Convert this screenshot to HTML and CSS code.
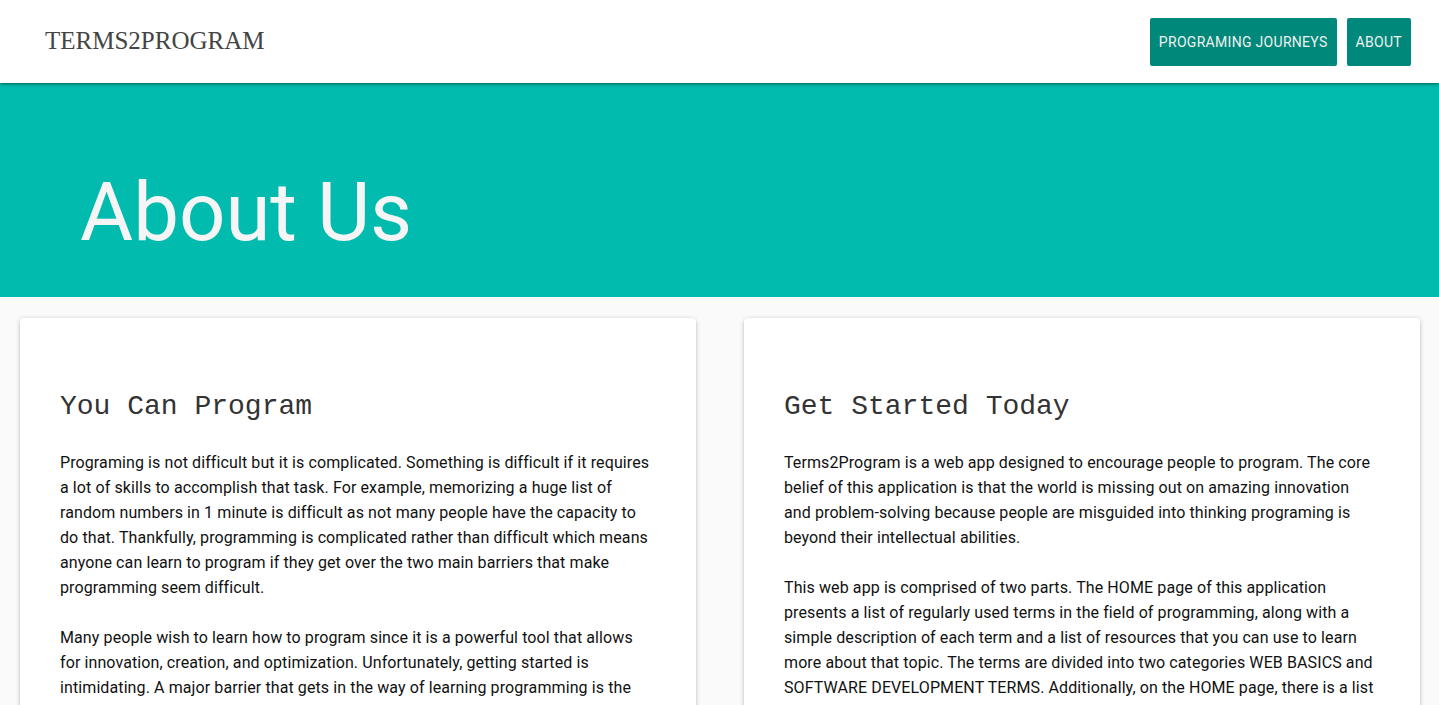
FILE: index.html
```html
<!DOCTYPE html>
<html lang="en">
<head>
<meta charset="utf-8">
<title>Terms2Program - About</title>
<link rel="stylesheet" href="styles.css">
</head>
<body>
<header class="topbar">
  <div class="brand">TERMS2PROGRAM</div>
  <nav class="nav">
    <a class="nav-btn" href="#">Programing Journeys</a>
    <a class="nav-btn" href="#">About</a>
  </nav>
</header>
<section class="hero">
  <h1 class="hero-title">About Us</h1>
</section>
<main class="cards">
  <article class="card">
    <h2 class="card-title">You Can Program</h2>
    <p>Programing is not difficult but it is complicated. Something is difficult if it requires a lot of skills to accomplish that task. For example, memorizing a huge list of random numbers in 1 minute is difficult as not many people have the capacity to do that. Thankfully, programming is complicated rather than difficult which means anyone can learn to program if they get over the two main barriers that make programming seem difficult.</p>
    <p>Many people wish to learn how to program since it is a powerful tool that allows for innovation, creation, and optimization. Unfortunately, getting started is intimidating. A major barrier that gets in the way of learning programming is the overwhelming amount of new terminology that beginners come across.</p>
  </article>
  <article class="card">
    <h2 class="card-title">Get Started Today</h2>
    <p>Terms2Program is a web app designed to encourage people to program. The core belief of this application is that the world is missing out on amazing innovation and problem-solving because people are misguided into thinking programing is beyond their intellectual abilities.</p>
    <p>This web app is comprised of two parts. The HOME page of this application presents a list of regularly used terms in the field of programming, along with a simple description of each term and a list of resources that you can use to learn more about that topic. The terms are divided into two categories WEB BASICS and SOFTWARE DEVELOPMENT TERMS. Additionally, on the HOME page, there is a list of programming journeys that you can follow.</p>
  </article>
</main>
</body>
</html>
```
FILE: styles.css
```css
html, body {
  margin: 0;
  padding: 0;
}
body {
  background: #fafafa;
  font-family: Roboto, "Noto Sans", sans-serif;
  color: #000;
}
.topbar {
  position: relative;
  z-index: 2;
  height: 83px;
  background: #fff;
  display: flex;
  align-items: center;
  justify-content: space-between;
  padding: 0 28px 0 45px;
  box-shadow: 0 2px 2px 0 rgba(0,0,0,0.14), 0 3px 1px -2px rgba(0,0,0,0.12), 0 1px 5px 0 rgba(0,0,0,0.2);
}
.brand {
  font-family: "Liberation Serif", serif;
  font-size: 25px;
  color: #444;
  padding-bottom: 1px;
}
.nav {
  display: flex;
  gap: 10px;
  margin-top: 1px;
}
.nav-btn {
  display: flex;
  align-items: center;
  height: 48px;
  padding: 0 9px;
  background: #00897b;
  color: #f0f0f0;
  text-decoration: none;
  text-transform: uppercase;
  font-size: 14px;
  letter-spacing: 0.3px;
  border-radius: 2px;
}
.hero {
  background: #00bbae;
  height: 214px;
  display: flex;
  align-items: center;
  padding-left: 80px;
  box-sizing: border-box;
  padding-top: 44px;
}
.hero-title {
  margin: 0;
  font-family: Roboto, sans-serif;
  font-weight: 400;
  font-size: 81.5px;
  color: #f5f5f5;
}
.cards {
  display: grid;
  grid-template-columns: 676px 676px;
  gap: 48px;
  padding: 21px 19px 0 20px;
}
.card {
  background: #fff;
  border-radius: 4px;
  padding: 69px 40px 40px;
  box-shadow: 0 2px 2px 0 rgba(0,0,0,0.14), 0 3px 1px -2px rgba(0,0,0,0.12), 0 1px 5px 0 rgba(0,0,0,0.2);
}
.card-title {
  margin: 0 0 23px;
  font-family: "Liberation Mono", "Courier New", monospace;
  font-weight: 400;
  font-size: 28px;
  line-height: 40px;
  color: #333;
}
.card p {
  margin: 0 0 25px;
  font-size: 16px;
  line-height: 25px;
  letter-spacing: 0.1px;
  color: #111;
}
```
